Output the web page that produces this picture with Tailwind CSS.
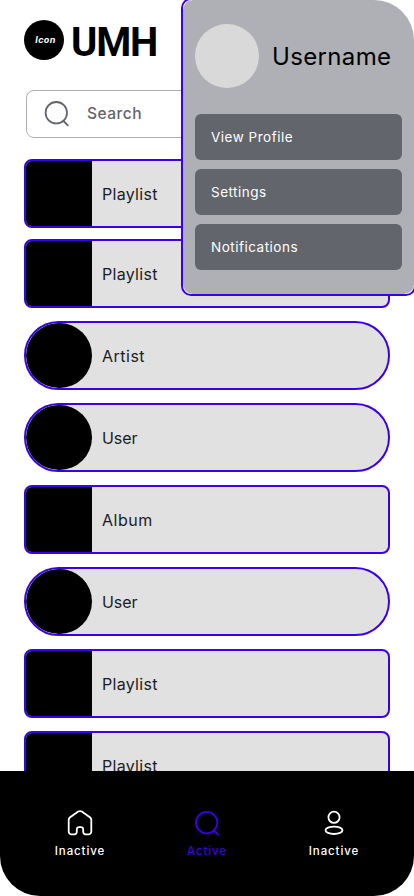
<!DOCTYPE html>
<html lang="en">
<head>
<meta charset="utf-8">
<title>UMH</title>
<script src="https://cdn.jsdelivr.net/npm/@tailwindcss/browser@4"></script>
</head>
<body class="bg-white font-['Inter','Liberation_Sans',sans-serif]">
<div class="relative flex h-[896px] w-[414px] flex-col overflow-hidden rounded-[40px] bg-white">
  <header class="flex items-center gap-[7px] pt-5 pl-6">
    <div class="flex size-10 items-center justify-center rounded-full bg-black pl-[3px] text-[9px] font-bold text-white italic tracking-[0.4px]">Icon</div>
    <div class="relative top-[3px] font-['Roboto',sans-serif] text-[40px] leading-10 font-bold tracking-[-1.2px] text-black">UMH</div>
  </header>
  <div class="mt-[30px] ml-[26px] flex h-12 w-[362px] shrink-0 items-center rounded-lg border border-[#aeafb4] pl-[17px] text-[#62656b]">
    <svg class="size-[26px]" viewBox="0 0 26 26" fill="none" stroke="currentColor" stroke-width="1.8" stroke-linecap="round"><circle cx="12.3" cy="11.7" r="10.7"/><path d="M19.5 20l4.300 4.300"/></svg>
    <span class="ml-[17px] text-[15.5px] font-medium tracking-[0.5px]">Search</span>
  </div>
  <main class="mt-[21px] flex min-h-0 flex-1 flex-col gap-[13px] overflow-hidden px-6 text-[16px] tracking-[0.3px] text-[#1c1c1e]">
    <div class="-mb-0.5 flex h-[69px] shrink-0 items-center overflow-hidden rounded-lg border-2 border-[#3c00e6] bg-[#e1e1e1]"><div class="h-full w-[66px] bg-black"></div><span class="ml-2.5">Playlist</span></div>
    <div class="flex h-[69px] shrink-0 items-center overflow-hidden rounded-lg border-2 border-[#3c00e6] bg-[#e1e1e1]"><div class="h-full w-[66px] bg-black"></div><span class="ml-2.5">Playlist</span></div>
    <div class="flex h-[69px] shrink-0 items-center overflow-hidden rounded-full border-2 border-[#3c00e6] bg-[#e1e1e1]"><div class="h-full w-[66px] rounded-full bg-black"></div><span class="ml-2.5 tracking-[0.5px]">Artist</span></div>
    <div class="flex h-[69px] shrink-0 items-center overflow-hidden rounded-full border-2 border-[#3c00e6] bg-[#e1e1e1]"><div class="h-full w-[66px] rounded-full bg-black"></div><span class="ml-2.5 tracking-[-0.05px]">User</span></div>
    <div class="flex h-[69px] shrink-0 items-center overflow-hidden rounded-lg border-2 border-[#3c00e6] bg-[#e1e1e1]"><div class="h-full w-[66px] bg-black"></div><span class="ml-2.5 tracking-[0.5px]">Album</span></div>
    <div class="flex h-[69px] shrink-0 items-center overflow-hidden rounded-full border-2 border-[#3c00e6] bg-[#e1e1e1]"><div class="h-full w-[66px] rounded-full bg-black"></div><span class="ml-2.5 tracking-[-0.05px]">User</span></div>
    <div class="flex h-[69px] shrink-0 items-center overflow-hidden rounded-lg border-2 border-[#3c00e6] bg-[#e1e1e1]"><div class="h-full w-[66px] bg-black"></div><span class="ml-2.5">Playlist</span></div>
    <div class="flex h-[69px] shrink-0 items-center overflow-hidden rounded-lg border-2 border-[#3c00e6] bg-[#e1e1e1]"><div class="h-full w-[66px] bg-black"></div><span class="ml-2.5">Playlist</span></div>
  </main>
  <nav class="flex h-[125px] shrink-0 justify-center gap-[27px] bg-black pt-[38px] text-[11.5px] leading-4 font-medium tracking-[0.9px] text-white">
    <div class="flex w-[100px] flex-col items-center gap-[6px]">
      <svg class="size-7" viewBox="0 0 28 28" fill="none" stroke="currentColor" stroke-width="1.8" stroke-linejoin="round"><path d="M12.2 2.6 3.8 8.6Q2.7 9.4 2.7 10.8V22.4a3 3 0 0 0 3 3H8.500a2.300 2.300 0 0 0 2.300-2.300V20.500a2.300 2.300 0 0 1 2.300-2.300h1.800a2.300 2.300 0 0 1 2.300 2.300v2.600a2.300 2.300 0 0 0 2.300 2.300h2.800a3 3 0 0 0 3-3V10.800Q25.300 9.400 24.200 8.600L15.800 2.600Q14 1.500 12.200 2.600Z"/></svg>
      <span>Inactive</span>
    </div>
    <div class="flex w-[100px] flex-col items-center gap-[6px] text-[#3c00e6]">
      <svg class="size-7" viewBox="0 0 28 28" fill="none" stroke="currentColor" stroke-width="1.8" stroke-linecap="round"><circle cx="13.600" cy="13.600" r="10.700"/><path d="M21 21.500l4 4"/></svg>
      <span>Active</span>
    </div>
    <div class="flex w-[100px] flex-col items-center gap-[6px]">
      <svg class="size-7" viewBox="0 0 28 28" fill="none" stroke="currentColor" stroke-width="1.8"><circle cx="14" cy="8.300" r="5.600"/><ellipse cx="14" cy="21.300" rx="8.500" ry="3.700"/></svg>
      <span>Inactive</span>
    </div>
  </nav>
  <aside class="absolute -top-0.5 left-[181px] h-[298px] w-[235px] rounded-[10px] border-2 border-[#3c00e6] bg-white">
    <div class="flex h-full flex-col rounded-[10px] bg-[#afb0b5] px-3 pt-6">
      <div class="flex items-center gap-[13px]">
        <div class="size-16 shrink-0 rounded-full bg-[#d9d9d9]"></div>
        <span class="pt-0.5 text-[24px] tracking-[0.35px] text-black">Username</span>
      </div>
      <div class="mt-[26px] flex w-[207px] flex-col gap-[9px] text-[13.5px] tracking-[0.5px] text-white">
        <div class="flex h-[46px] items-center rounded-md bg-[#62656b] pl-4">View Profile</div>
        <div class="flex h-[46px] items-center rounded-md bg-[#62656b] pl-4">Settings</div>
        <div class="flex h-[46px] items-center rounded-md bg-[#62656b] pl-4">Notifications</div>
      </div>
    </div>
  </aside>
</div>
</body>
</html>
